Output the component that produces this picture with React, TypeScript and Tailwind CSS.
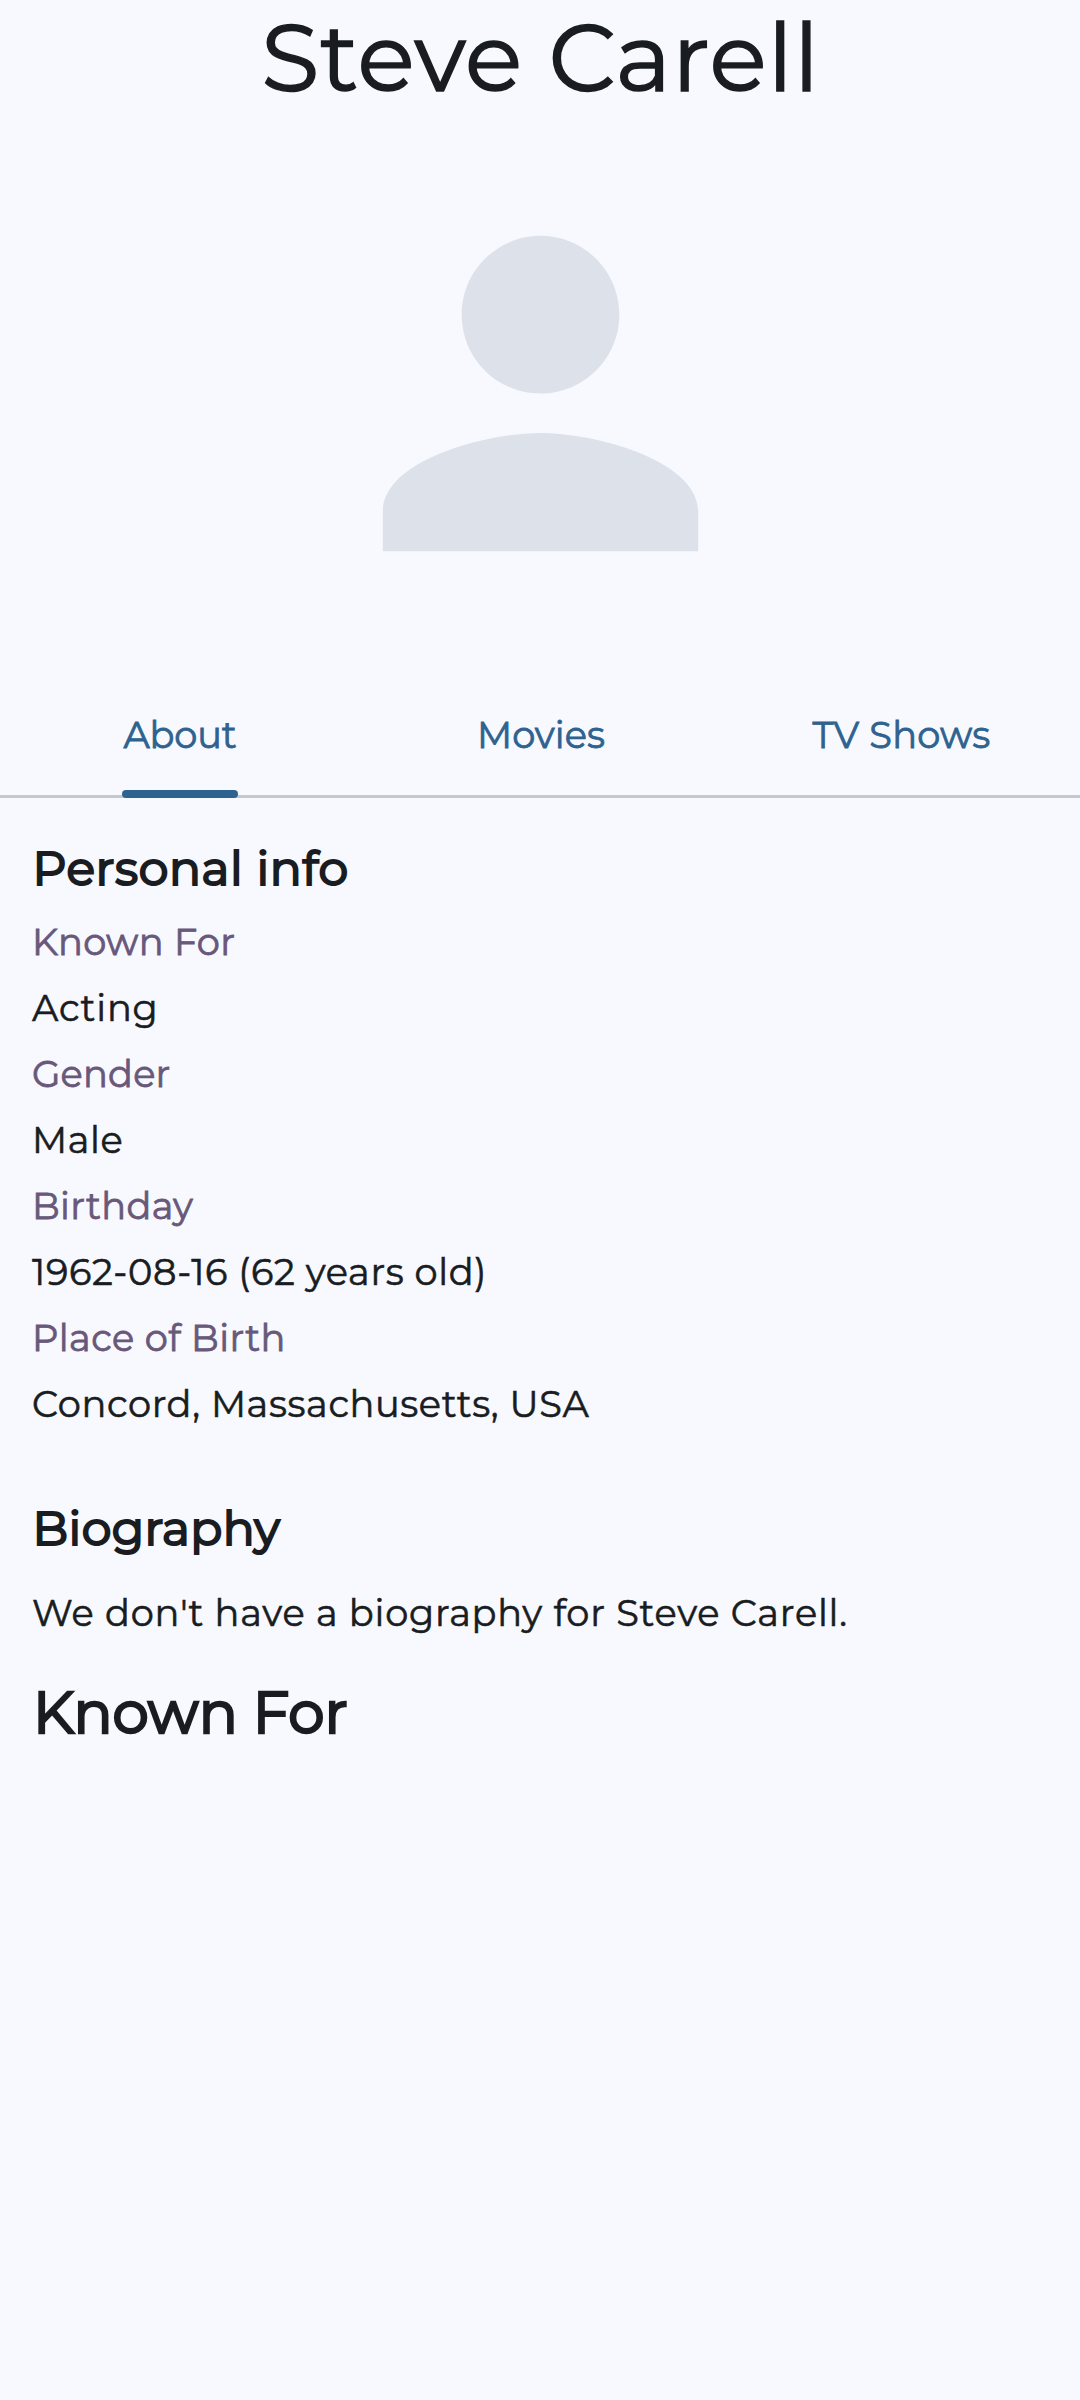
type Fact = { label: string; value: string; labelClass: string; valueClass: string };

const facts: Fact[] = [
  { label: "Known For", value: "Acting", labelClass: "tracking-[0.34px]", valueClass: "tracking-[0.75px]" },
  { label: "Gender", value: "Male", labelClass: "tracking-[0.2px]", valueClass: "tracking-[0.65px]" },
  { label: "Birthday", value: "1962-08-16 (62 years old)", labelClass: "tracking-[0.35px]", valueClass: "tracking-[0.63px]" },
  { label: "Place of Birth", value: "Concord, Massachusetts, USA", labelClass: "tracking-[0.42px]", valueClass: "tracking-[0.64px]" },
];

const tabs = [
  { name: "About", active: true, className: "tracking-[-0.15px]" },
  { name: "Movies", active: false, className: "pl-[2px] tracking-[0.1px]" },
  { name: "TV Shows", active: false, className: "pl-[3px] tracking-[0.25px]" },
];

function PersonIcon() {
  return (
    <svg className="size-[473px] fill-[#dde2ea]" viewBox="0 0 24 24" aria-hidden="true">
      <path d="M12 12c2.21 0 4-1.79 4-4s-1.79-4-4-4-4 1.79-4 4 1.79 4 4 4zm0 2c-2.67 0-8 1.34-8 4v2h16v-2c0-2.66-5.33-4-8-4z" />
    </svg>
  );
}

function Tabs() {
  return (
    <nav className="relative grid h-[168px] grid-cols-3 text-[36.75px] leading-[45px] text-[#2e628f] [-webkit-text-stroke:0.8px_#2e628f]">
      <div className="absolute inset-x-0 top-[165px] h-[3px] bg-[#c4c9d1]" />
      {tabs.map((tab) => (
        <div key={tab.name} className="relative flex h-[168px] flex-col items-center justify-between pt-[82px]">
          <span className={tab.className}>{tab.name}</span>
          {tab.active && <div className="h-2 w-[116px] rounded-[4px] bg-[#2e628f]" />}
        </div>
      ))}
    </nav>
  );
}

export default function App() {
  return (
    <main className="flex min-h-[2400px] w-[1080px] flex-col bg-[#f8f9ff] font-[Montserrat,Inter,sans-serif] text-[#191c20]">
      <h1 className="pl-px text-center text-[94.5px] leading-[115px] tracking-[0.8px] [-webkit-text-stroke:1.5px_#191c20]">Steve Carell</h1>
      <div className="flex h-[515px] justify-center pt-[42px]">
        <PersonIcon />
      </div>
      <Tabs />
      <section className="px-8 pt-[34px]">
        <h2 className="pl-[0.5px] text-[47.25px] leading-[72px] tracking-[0.63px] [-webkit-text-stroke:2.1px_#191c20]">Personal info</h2>
        <dl className="mt-[4.5px] text-[36.75px] leading-[66px]">
          {facts.map((fact) => (
            <div key={fact.label}>
              <dt className={"text-[#68587a] [-webkit-text-stroke:0.8px_#68587a] " + fact.labelClass}>{fact.label}</dt>
              <dd className={"[-webkit-text-stroke:0.6px_#191c20] " + fact.valueClass}>{fact.value}</dd>
            </div>
          ))}
        </dl>
      </section>
      <section className="px-8 pt-[55.5px]">
        <h2 className="pl-[0.5px] text-[47.25px] leading-[72px] tracking-[0.43px] [-webkit-text-stroke:2.1px_#191c20]">Biography</h2>
        <p className="mt-[15.5px] text-[36.75px] leading-[66px] tracking-[0.8px] [-webkit-text-stroke:0.6px_#191c20]">We don't have a biography for Steve Carell.</p>
        <h2 className="mt-[24.5px] pl-px text-[57.75px] leading-[84px] [-webkit-text-stroke:2.5px_#191c20]">Known For</h2>
      </section>
    </main>
  );
}
